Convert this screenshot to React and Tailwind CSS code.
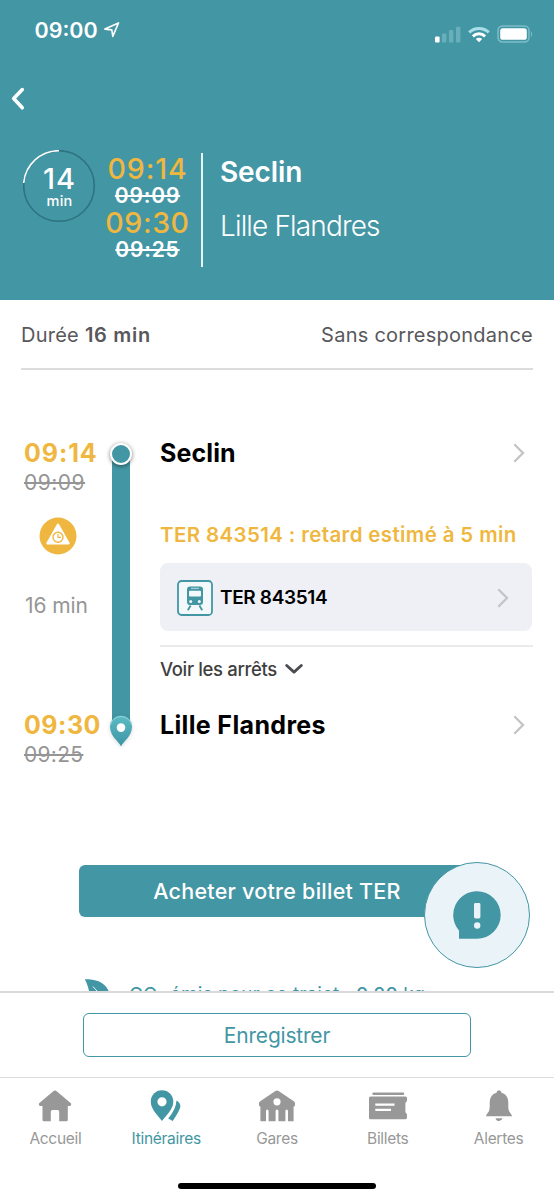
const ChevronRight = () => (
  <svg width="12" height="20" viewBox="0 0 12 20" fill="none" stroke="#c4c4c7" strokeWidth="2.3">
    <path d="M1.3 1.3 L10 10 L1.3 18.7" />
  </svg>
);

const StatusBar = () => (
  <div className="flex h-[59px] items-center justify-between pl-[34.5px] pr-[20px]">
    <div className="flex items-center gap-[6px]">
      <span className="text-[21.5px] font-semibold leading-6">09:00</span>
      <svg width="16" height="16" viewBox="0 0 16 16" fill="none" stroke="white" strokeWidth="1.6" strokeLinejoin="round">
        <path d="M14.5 0.9 L0.9 7.1 L7.8 7.9 L8.8 14.4 Z" />
      </svg>
    </div>
    <div className="mt-[9px] flex items-center">
      <svg width="26" height="17" viewBox="0 0 26 17" fill="#69afba">
        <rect x="0" y="10.5" width="4.6" height="6" rx="1" fill="white" />
        <rect x="7" y="7.5" width="4.4" height="9" rx="1" />
        <rect x="14" y="4" width="4.4" height="12.5" rx="1" />
        <rect x="21" y="0.8" width="4.4" height="15.7" rx="1" />
      </svg>
      <svg className="ml-[7px]" width="22" height="17" viewBox="0 0 22 17" fill="none" strokeWidth="3">
        <path d="M1.2 6.4 A14 14 0 0 1 20.8 6.4" stroke="#a9dfe9" />
        <path d="M4.9 10.3 A8.8 8.8 0 0 1 17.1 10.3" stroke="white" />
        <path d="M7.8 13 A4.6 4.6 0 0 1 14.2 13 L11 16.3 Z" fill="white" stroke="none" />
      </svg>
      <svg className="ml-[7px]" width="37" height="18" viewBox="0 0 37 18">
        <rect x="1" y="1" width="31" height="16" rx="4.5" fill="none" stroke="#7dbdc8" strokeWidth="1.5" />
        <rect x="3.2" y="3.2" width="26.6" height="11.6" rx="2.6" fill="white" />
        <path d="M34 6 Q36.2 9 34 12 Z" fill="#7dbdc8" />
      </svg>
    </div>
  </div>
);

const Header = () => (
  <header className="h-[300px] shrink-0 bg-[#4396a4] text-white">
    <StatusBar />
    <div className="flex h-[79px] items-center pl-[11px]">
      <svg width="14" height="24" viewBox="0 0 14 24" fill="none" stroke="white" strokeWidth="3.6" strokeLinecap="round" strokeLinejoin="round">
        <path d="M11.3 2.6 L2.7 11.6 L11.3 20.8" />
      </svg>
    </div>
    <div className="flex pl-[23px] pt-[12px]">
      <div className="relative h-[73px] w-[73px]">
        <svg className="absolute inset-0" width="73" height="73" viewBox="0 0 73 73" fill="none" strokeWidth="1.6">
          <circle cx="36" cy="36" r="35.3" stroke="#2e7380" />
          <path d="M0.7 33 A35.3 35.3 0 0 1 36 0.7" stroke="white" />
        </svg>
        <div className="flex flex-col items-center pt-[17px]">
          <span className="text-[29px] font-medium leading-[24px] tracking-[1px]">14</span>
          <span className="text-[14.5px] font-medium leading-[20px] tracking-[0.2px]">min</span>
        </div>
      </div>
      <div className="ml-[5px] flex w-[93px] flex-col items-center pt-[3px]">
        <span className="text-[28.5px] font-medium leading-[32px] tracking-[0.9px] text-[#efb740]">09:14</span>
        <span className="text-[21px] font-semibold leading-[22px] tracking-[0.8px] line-through decoration-2">09:09</span>
        <span className="text-[28.5px] font-medium leading-[32px] tracking-[0.6px] text-[#efb740]">09:30</span>
        <span className="text-[21px] font-semibold leading-[22px] tracking-[0.8px] line-through decoration-2">09:25</span>
      </div>
      <div className="ml-[7px] mt-[3px] h-[114px] w-[2px] bg-[#e6f4f6]" />
      <div className="ml-[17px] flex flex-col pt-[3px]">
        <span className="text-[28px] font-semibold leading-[38px] tracking-[-0.1px]">Seclin</span>
        <span className="mt-[16px] text-[28px] font-light leading-[38px] tracking-[-0.85px]">Lille Flandres</span>
      </div>
    </div>
  </header>
);

const DelayIcon = () => (
  <svg width="38" height="38" viewBox="0 0 38 38">
    <circle cx="19" cy="19" r="18.5" fill="#efb740" />
    <path d="M19 7.8 L29.5 26.3 H8.5 Z" fill="white" stroke="white" strokeWidth="2.4" strokeLinejoin="round" />
    <circle cx="19" cy="20.2" r="5" fill="none" stroke="#efb740" strokeWidth="1.4" />
    <path d="M19 17 V20.4 H22" fill="none" stroke="#efb740" strokeWidth="1.2" />
  </svg>
);

const TrainIcon = () => (
  <svg width="36" height="36" viewBox="0 0 36 36">
    <rect x="1" y="1" width="34" height="34" rx="3.5" fill="#f3f8fa" stroke="#4396a4" strokeWidth="1.8" />
    <path d="M13 6.5 H23 Q26 6.5 26 9.5 V22 Q26 25 23 25 H13 Q10 25 10 22 V9.5 Q10 6.5 13 6.5 Z" fill="#4396a4" />
    <path d="M14 8.3 H22" stroke="#b9dbe1" strokeWidth="1" />
    <rect x="12" y="10.8" width="12" height="5.8" rx="1" fill="#f3f8fa" />
    <circle cx="13.7" cy="21.6" r="1.5" fill="#f3f8fa" />
    <circle cx="22.3" cy="21.6" r="1.5" fill="#f3f8fa" />
    <path d="M13.6 25.5 L10.8 30.3 M22.4 25.5 L25.2 30.3" stroke="#4396a4" strokeWidth="1.8" />
  </svg>
);

const DestinationPin = () => (
  <svg className="absolute -left-[5px] top-[260px] drop-shadow-sm" width="28" height="38" viewBox="0 0 28 38">
    <defs>
      <linearGradient id="pin" x1="0" y1="0" x2="0" y2="1">
        <stop offset="0" stopColor="#5bbcc5" />
        <stop offset="1" stopColor="#3d94a3" />
      </linearGradient>
    </defs>
    <path d="M14 32.5 C12 27.5 3 22.5 3 12.5 A11 11 0 0 1 25 12.5 C25 22.5 16 27.5 14 32.5 Z" fill="url(#pin)" />
    <path d="M3.3 11 A11 11 0 0 1 24.7 11" fill="none" stroke="#a5d9df" strokeWidth="0.8" />
    <circle cx="14" cy="13.6" r="4.3" fill="white" />
  </svg>
);

const Journey = () => (
  <section className="flex h-[340px] pt-[69px]">
    <div className="flex w-[112px] flex-col pl-[24px]">
      <span className="text-[25px] font-bold leading-[28px] tracking-[0.9px] text-[#efb740]">09:14</span>
      <span className="text-[21px] leading-[31px] tracking-[0.5px] text-[#959595]">
        <span className="line-through decoration-2">09:09</span>
      </span>
      <div className="ml-[15px] mt-[19px]">
        <DelayIcon />
      </div>
      <span className="mt-[37px] pl-[1px] text-[21px] leading-[28px] tracking-[-0.1px] text-[#959595]">16 min</span>
      <span className="mt-[91px] text-[25px] font-bold leading-[28px] tracking-[0.5px] text-[#efb740]">09:30</span>
      <span className="text-[21px] leading-[32px] tracking-[0.3px] text-[#959595]">
        <span className="line-through decoration-2">09:25</span>
      </span>
    </div>
    <div className="relative mt-[15px] h-[270px] w-[18px] bg-[#4396a4]">
      <div className="absolute -left-[2px] -top-[11px] h-[22px] w-[22px] rounded-full border-[2.5px] border-white bg-[#4396a4] shadow-[0_1px_4px_rgba(0,0,0,0.5)]" />
      <DestinationPin />
    </div>
    <div className="ml-[30px] flex w-[373px] flex-col">
      <div className="flex shrink-0 items-center justify-between pr-[8px]">
        <span className="text-[25px] font-bold leading-[28px] tracking-[0.1px]">Seclin</span>
        <ChevronRight />
      </div>
      <span className="mt-[54px] text-[20.5px] font-semibold leading-[28px] tracking-[0.37px] whitespace-nowrap text-[#efb740]">
        TER 843514 : retard estimé à 5 min
      </span>
      <div className="mt-[14.5px] flex h-[67.5px] w-[372px] shrink-0 items-center rounded-lg bg-[#eff0f6] pt-[2px] pl-[17px] pr-[23px]">
        <TrainIcon />
        <span className="ml-[7px] mt-px text-[19px] font-semibold leading-6 tracking-[-0.35px]">TER 843514</span>
        <div className="ml-auto">
          <ChevronRight />
        </div>
      </div>
      <div className="mt-[14.5px] h-[2px] shrink-0 bg-[#ebebed]" />
      <div className="mt-[9.5px] flex shrink-0 items-center gap-[8px] text-[#3f3f42]">
        <span className="text-[18.5px] font-medium leading-6 tracking-[-0.35px]">Voir les arrêts</span>
        <svg width="18" height="11" viewBox="0 0 18 11" fill="none" stroke="#4b4b50" strokeWidth="2.8" strokeLinecap="round" strokeLinejoin="round">
          <path d="M1.7 2.5 L9 9.1 L16.3 2.5" />
        </svg>
      </div>
      <div className="mt-[30px] flex shrink-0 items-center justify-between pr-[8px]">
        <span className="text-[25px] font-bold leading-[28px] tracking-[0.35px]">Lille Flandres</span>
        <ChevronRight />
      </div>
    </div>
  </section>
);

const AlertButton = () => (
  <button className="absolute left-[424px] top-[562px] flex h-[106px] w-[106px] items-center justify-center rounded-full border border-[#4396a4] bg-[#eaf4f8]">
    <svg width="48" height="48" viewBox="0 0 48 48">
      <path d="M24 0.3 A23.7 23.7 0 0 1 24 47.7 H6 V39.5 A23.7 23.7 0 0 1 24 0.3 Z" fill="#4396a4" />
      <rect x="21" y="12" width="6.4" height="15.5" rx="1.4" fill="#eaf4f8" />
      <circle cx="24.2" cy="34.5" r="3.2" fill="#eaf4f8" />
    </svg>
  </button>
);

const HomeIcon = () => (
  <svg width="34" height="32" viewBox="0 0 34 32">
    <path d="M17 0.5 Q18 0.5 19 1.4 L32.6 13 Q33.6 14 33 15.2 Q32.6 16 31.5 16 H29.8 V29.8 Q29.8 31.3 28.3 31.3 H21.2 V21.5 Q21.2 20 19.7 20 H14.3 Q12.8 20 12.8 21.5 V31.3 H5.7 Q4.5 31.3 4.5 29.8 V16 H2.5 Q1.4 16 1 15.2 Q0.4 14 1.4 13 L15 1.4 Q16 0.5 17 0.5 Z" fill="#989898" />
  </svg>
);

const RouteIcon = () => (
  <svg width="32" height="32" viewBox="0 0 32 32" fill="#4396a4">
    <path fillRule="evenodd" d="M12 0.3 C18.5 0.3 23.3 5.2 23.3 11.5 C23.3 19.5 16.5 25 12 31 C7.5 25 0.8 19.5 0.8 11.5 C0.8 5.2 5.6 0.3 12 0.3 Z M12 7.2 A4.6 4.6 0 1 0 12 16.4 A4.6 4.6 0 1 0 12 7.2 Z" />
    <path d="M26.5 10.5 Q30.6 12.8 30.3 16.7 Q29.8 20.5 22.7 31 L18.2 28.4 Q26 19.5 26.5 10.5 Z" />
  </svg>
);

const StationIcon = () => (
  <svg width="38" height="32" viewBox="0 0 38 32">
    <path d="M19 0.5 Q19.8 0.5 20.6 1.1 L35.8 11.2 Q37 12 37 13.2 V15.3 Q37 16.5 35.6 16.5 V31.2 H30 V21 Q30 19.5 28.7 19.5 Q27.4 19.5 27.4 21 V31.2 H20.4 V21 Q20.4 19.5 19 19.5 Q17.6 19.5 17.6 21 V31.2 H10.6 V21 Q10.6 19.5 9.3 19.5 Q8 19.5 8 21 V31.2 H2.4 V16.5 Q1 16.5 1 15.3 V13.2 Q1 12 2.2 11.2 L17.4 1.1 Q18.2 0.5 19 0.5 Z" fill="#989898" />
    <circle cx="19" cy="11.8" r="3.6" fill="white" />
  </svg>
);

const TicketIcon = () => (
  <svg width="40" height="32" viewBox="0 0 40 32" fill="#989898">
    <rect x="4.3" y="2.4" width="32" height="2.6" rx="1.3" />
    <path d="M2.5 6.4 H37.5 Q39 6.4 39 7.9 V11 Q37.4 12 37.4 13.5 V21.5 Q37.4 23 39 24 V27.5 Q39 29.3 37.5 29.3 H2.5 Q1 29.3 1 27.8 V7.9 Q1 6.4 2.5 6.4 Z" />
    <path d="M7.3 14.6 H26.5 M7.3 19.8 H23" stroke="white" strokeWidth="2.2" />
  </svg>
);

const BellIcon = () => (
  <svg width="28" height="32" viewBox="0 0 28 32" fill="#989898">
    <path d="M14 0.3 Q16.3 0.3 16.5 2.8 Q23.3 4.8 23.3 12.5 V17.5 Q23.3 21.5 26 24 Q27 25.3 27 26.3 H1 Q1 25.3 2 24 Q4.7 21.5 4.7 17.5 V12.5 Q4.7 4.8 11.5 2.8 Q11.7 0.3 14 0.3 Z" />
    <path d="M10.5 28.2 H17.5 Q16.7 31 14 31 Q11.3 31 10.5 28.2 Z" />
  </svg>
);

const tabs = [
  { label: "Accueil", icon: <HomeIcon /> },
  { label: "Itinéraires", icon: <RouteIcon />, active: true },
  { label: "Gares", icon: <StationIcon /> },
  { label: "Billets", icon: <TicketIcon /> },
  { label: "Alertes", icon: <BellIcon /> },
];

const App = () => {
  return (
    <div className="flex h-[1200px] w-[554px] flex-col overflow-hidden bg-white font-['Inter',sans-serif] text-black">
      <Header />
      <main className="relative h-[691px] shrink-0 overflow-hidden">
        <div className="mx-[21px] flex h-[68px] items-center justify-between pt-[2px] text-[20px] text-[#58585b]">
          <p className="tracking-[0.25px]">
            Durée <span className="font-semibold tracking-[0.7px]">16 min</span>
          </p>
          <p className="tracking-[0.25px]">Sans correspondance</p>
        </div>
        <div className="mx-[21px] h-[1.5px] bg-[#dcdcde]" />
        <Journey />
        <button className="ml-[79px] mt-[155px] block h-[52px] w-[396px] rounded-md bg-[#4396a4] pt-px text-[21.5px] font-medium tracking-[0.25px] text-white">
          Acheter votre billet TER
        </button>
        <div className="mt-[61px] flex items-start pl-[84px] text-[#4396a4]">
          <svg width="27" height="28" viewBox="0 0 27 28">
            <path d="M0.8 1.3 C12 1.3 22 4 25.3 15 C26 22 20 26 14 26 C4 24 7 12 0.8 1.3 Z" fill="#4396a4" />
            <path d="M9 8.5 L20 21 M13 12.8 V17 M14 13.5 H18" stroke="white" strokeWidth="0.9" fill="none" />
          </svg>
          <p className="ml-[18px] mt-[5px] text-[19px] leading-6 tracking-[0.1px]">
            CO<span className="relative top-[4px] text-[11px]">2</span> émis pour ce trajet :{" "}
            <span className="font-medium">0,20</span> kg
          </p>
        </div>
        <AlertButton />
      </main>
      <div className="flex h-[86px] shrink-0 justify-center border-t-2 border-[#d9d9db] pt-[20px]">
        <button className="h-[44px] w-[388px] rounded-md border-[1.5px] border-[#4396a4] pt-px text-[21px] tracking-[-0.2px] text-[#4396a4]">
          Enregistrer
        </button>
      </div>
      <nav className="flex h-[85px] shrink-0 border-t border-[#dedee0] pt-[12px]">
        {tabs.map((tab) => (
          <div
            key={tab.label}
            className={`flex flex-1 flex-col items-center ${tab.active ? "text-[#4396a4]" : "text-[#989898]"}`}
          >
            {tab.icon}
            <span className="mt-[7px] text-[15.5px] leading-5 tracking-[-0.3px]">{tab.label}</span>
          </div>
        ))}
      </nav>
      <div className="mx-auto mt-[21px] h-[6px] w-[198px] shrink-0 rounded-full bg-black" />
    </div>
  );
};

export default App;
